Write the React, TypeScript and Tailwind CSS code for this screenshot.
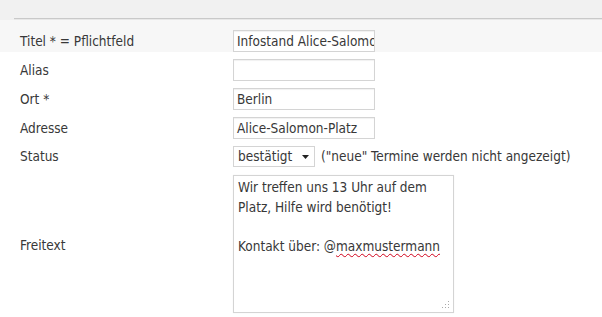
const FONT = { fontFamily: '"DejaVu Sans Condensed", "Liberation Sans", sans-serif' };

const ROWS = [
  { label: "Alias", value: "" },
  { label: "Ort *", value: "Berlin" },
  { label: "Adresse", value: "Alice-Salomon-Platz" },
];

function Field({ value }: { value: string }) {
  return (
    <div className="flex h-[22px] w-[142px] items-center overflow-hidden whitespace-nowrap border border-[#d4d4d4] bg-white px-[3px] shadow-[inset_0_1px_1px_rgba(0,0,0,0.06)]">
      {value}
    </div>
  );
}

function Grip() {
  return (
    <svg width="8" height="8" viewBox="0 0 8 8" className="absolute bottom-[3px] right-[3px]">
      <rect x="6" y="0" width="1" height="1" fill="#aaa" />
      <rect x="3" y="3" width="1" height="1" fill="#aaa" />
      <rect x="6" y="3" width="1" height="1" fill="#aaa" />
      <rect x="0" y="6" width="1" height="1" fill="#aaa" />
      <rect x="3" y="6" width="1" height="1" fill="#aaa" />
      <rect x="6" y="6" width="1" height="1" fill="#aaa" />
    </svg>
  );
}

export default function App() {
  return (
    <div className="h-[317px] w-[602px] overflow-hidden bg-white text-[13.5px] text-[#383838]" style={FONT}>
      <div className="h-[18px] bg-[#f1f1f1]" />
      <div className="flex h-[2px] bg-[#f1f1f1]">
        <div className="w-[14px]" />
        <div className="flex-1 border-t border-[#c9c9c9] bg-[#e8e8e8]" />
      </div>

      <div className="flex h-[32px] items-end bg-[#f7f7f7] pl-[20px]">
        <div className="flex h-[22px] w-[213px] items-center">Titel * = Pflichtfeld</div>
        <Field value="Infostand Alice-Salomon-Platz" />
      </div>

      <div className="flex flex-col gap-[7px] pt-[7px] pl-[20px]">
        {ROWS.map((r) => (
          <div key={r.label} className="flex items-center">
            <div className="w-[213px]">{r.label}</div>
            <Field value={r.value} />
          </div>
        ))}

        <div className="flex items-center">
          <div className="w-[213px]">Status</div>
          <div className="flex h-[21px] w-[82px] items-center justify-between border border-[#d4d4d4] bg-white pl-[4px] pr-[5px]">
            <span>bestätigt</span>
            <svg width="7" height="4" viewBox="0 0 7 4">
              <path d="M0 0h7L3.5 4z" fill="#222" />
            </svg>
          </div>
          <span className="ml-[6px]">("neue" Termine werden nicht angezeigt)</span>
        </div>

        <div className="flex items-center pt-[1px]">
          <div className="w-[213px] pt-[3px]">Freitext</div>
          <div className="relative h-[138px] w-[221px] border border-[#d4d4d4] bg-white px-[4px] pt-[2px] leading-[19.5px] shadow-[0_0_1px_rgba(0,0,0,0.08)]">
            <div>Wir treffen uns 13 Uhr auf dem</div>
            <div>Platz, Hilfe wird benötigt!</div>
            <div>&nbsp;</div>
            <div>
              Kontakt über: @
              <span className="underline decoration-[#d0021b] decoration-wavy decoration-1 underline-offset-2">maxmustermann</span>
            </div>
            <Grip />
          </div>
        </div>
      </div>
    </div>
  );
}
